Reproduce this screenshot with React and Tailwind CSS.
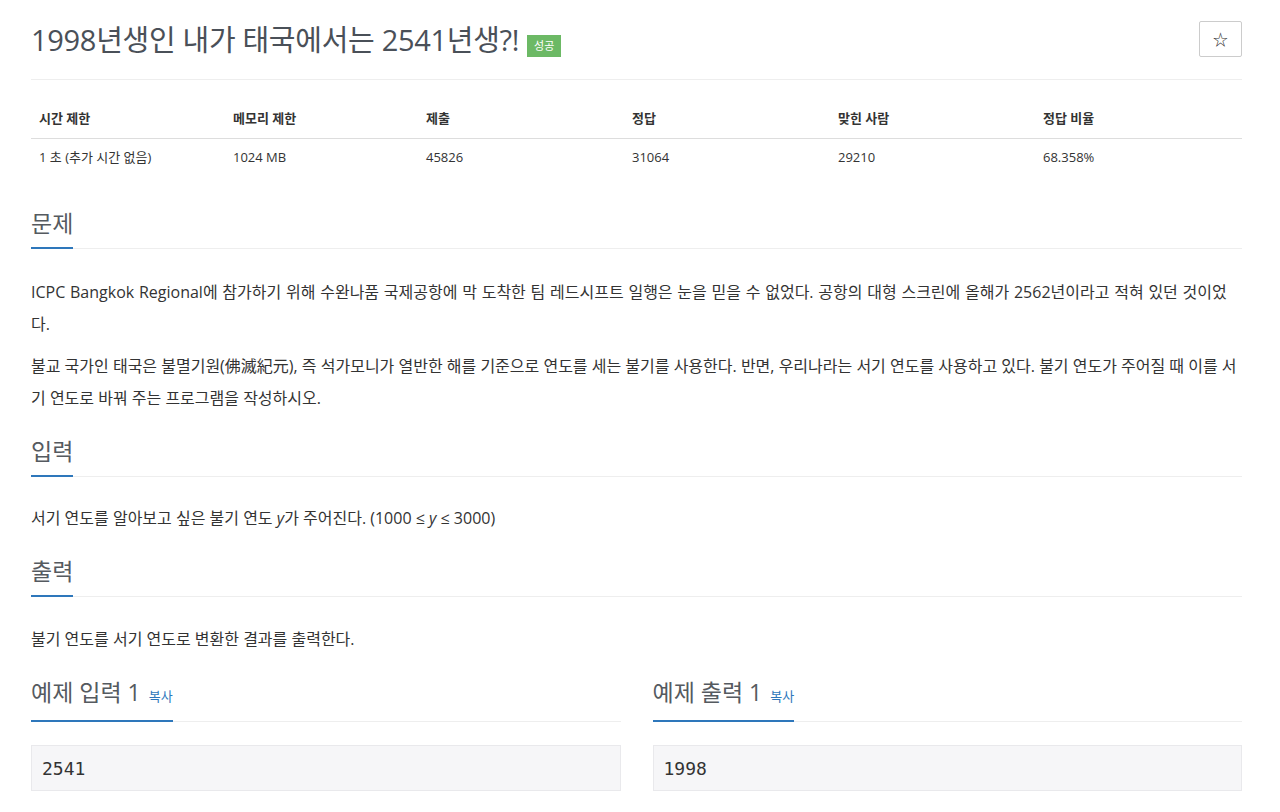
import React from 'react';

const font = { fontFamily: '"Open Sans", "Noto Sans CJK KR", sans-serif' };

const stats = [
    { label: '시간 제한', value: '1 초 (추가 시간 없음)' },
    { label: '메모리 제한', value: '1024 MB' },
    { label: '제출', value: '45826' },
    { label: '정답', value: '31064' },
    { label: '맞힌 사람', value: '29210' },
    { label: '정답 비율', value: '68.358%' },
];

const SectionHeading = ({ children, extra }) => (
    <div className="border-b border-[#eeeeee] flex">
        <h2 className="border-b-2 border-[#2e77bb] -mb-px pb-[7px] leading-[34px] text-[#555a60] flex items-baseline text-[23px]">
            {children}
            {extra}
        </h2>
    </div>
);

const CopyLink = () => <span className="ml-[8px] text-[13px] text-[#2e77bb]">복사</span>;

const App = () => {
    return (
        <div className="bg-white w-[1280px] min-h-[812px] text-[#333333]" style={font}>
            <div className="pl-[31px] pr-[38px] pt-[21px]">
                {/* Title */}
                <div className="flex items-start justify-between border-b border-[#eeeeee] pb-[20px]">
                    <div className="flex items-center gap-[8px]">
                        <h1 className="text-[29px] tracking-[-0.3px] leading-[38px] text-[#4a5058]">1998년생인 내가 태국에서는 2541년생?!</h1>
                        <span className="mt-[12px] bg-[#6cb965] text-white text-[11px] leading-[14px] px-[7px] py-[4px]">성공</span>
                    </div>
                    <button className="w-[43px] h-[36px] border border-[#cccccc] rounded-[2px] flex items-center justify-center text-[#333] text-[15px]">
                        ☆
                    </button>
                </div>

                {/* Stats table */}
                <div className="mt-[20px] grid grid-cols-[194px_193px_206px_206px_205px_207px] text-[13px]">
                    {stats.map((s) => (
                        <div key={s.label} className="border-b border-[#dddddd] px-[8px] pt-[8px] pb-[10px] leading-[20px] font-bold text-[#333]">
                            {s.label}
                        </div>
                    ))}
                    {stats.map((s) => (
                        <div key={s.label + 'v'} className="px-[8px] pt-[8px] pb-[9px] leading-[20px]">
                            {s.value}
                        </div>
                    ))}
                </div>

                {/* 문제 */}
                <div className="mt-[30px]">
                    <SectionHeading>문제</SectionHeading>
                    <div className="mt-[27px] text-[16px] leading-[32px] text-[#333]">
                        <p className="[word-spacing:0.6px]">ICPC Bangkok Regional에 참가하기 위해 수완나품 국제공항에 막 도착한 팀 레드시프트 일행은 눈을 믿을 수 없었다. 공항의 대형 스크린에 올해가 2562년이라고 적혀 있던 것이었다.</p>
                        <p className="mt-[10px]">불교 국가인 태국은 불멸기원(佛滅紀元), 즉 석가모니가 열반한 해를 기준으로 연도를 세는 불기를 사용한다. 반면, 우리나라는 서기 연도를 사용하고 있다. 불기 연도가 주어질 때 이를 서기 연도로 바꿔 주는 프로그램을 작성하시오.</p>
                    </div>
                </div>

                {/* 입력 */}
                <div className="mt-[20px]">
                    <SectionHeading>입력</SectionHeading>
                    <p className="mt-[25px] text-[16px] leading-[32px]">
                        서기 연도를 알아보고 싶은 불기 연도 <i>y</i>가 주어진다. (1000 ≤ <i>y</i> ≤ 3000)
                    </p>
                </div>

                {/* 출력 */}
                <div className="mt-[20px]">
                    <SectionHeading>출력</SectionHeading>
                    <p className="mt-[26px] text-[16px] leading-[32px]">불기 연도를 서기 연도로 변환한 결과를 출력한다.</p>
                </div>

                {/* 예제 */}
                <div className="mt-[20px] grid grid-cols-2 gap-[32px]">
                    <div>
                        <SectionHeading extra={<CopyLink />}>예제 입력 1</SectionHeading>
                        <pre className="mt-[23px] bg-[#f6f6f8] border border-[#e9e9ec] px-[10px] pt-[10px] pb-[9px] text-[18px] leading-[25px] text-[#333] font-['DejaVu_Sans_Mono',monospace]">2541</pre>
                    </div>
                    <div>
                        <SectionHeading extra={<CopyLink />}>예제 출력 1</SectionHeading>
                        <pre className="mt-[23px] bg-[#f6f6f8] border border-[#e9e9ec] px-[10px] pt-[10px] pb-[9px] text-[18px] leading-[25px] text-[#333] font-['DejaVu_Sans_Mono',monospace]">1998</pre>
                    </div>
                </div>
            </div>
        </div>
    );
};

export default App;
